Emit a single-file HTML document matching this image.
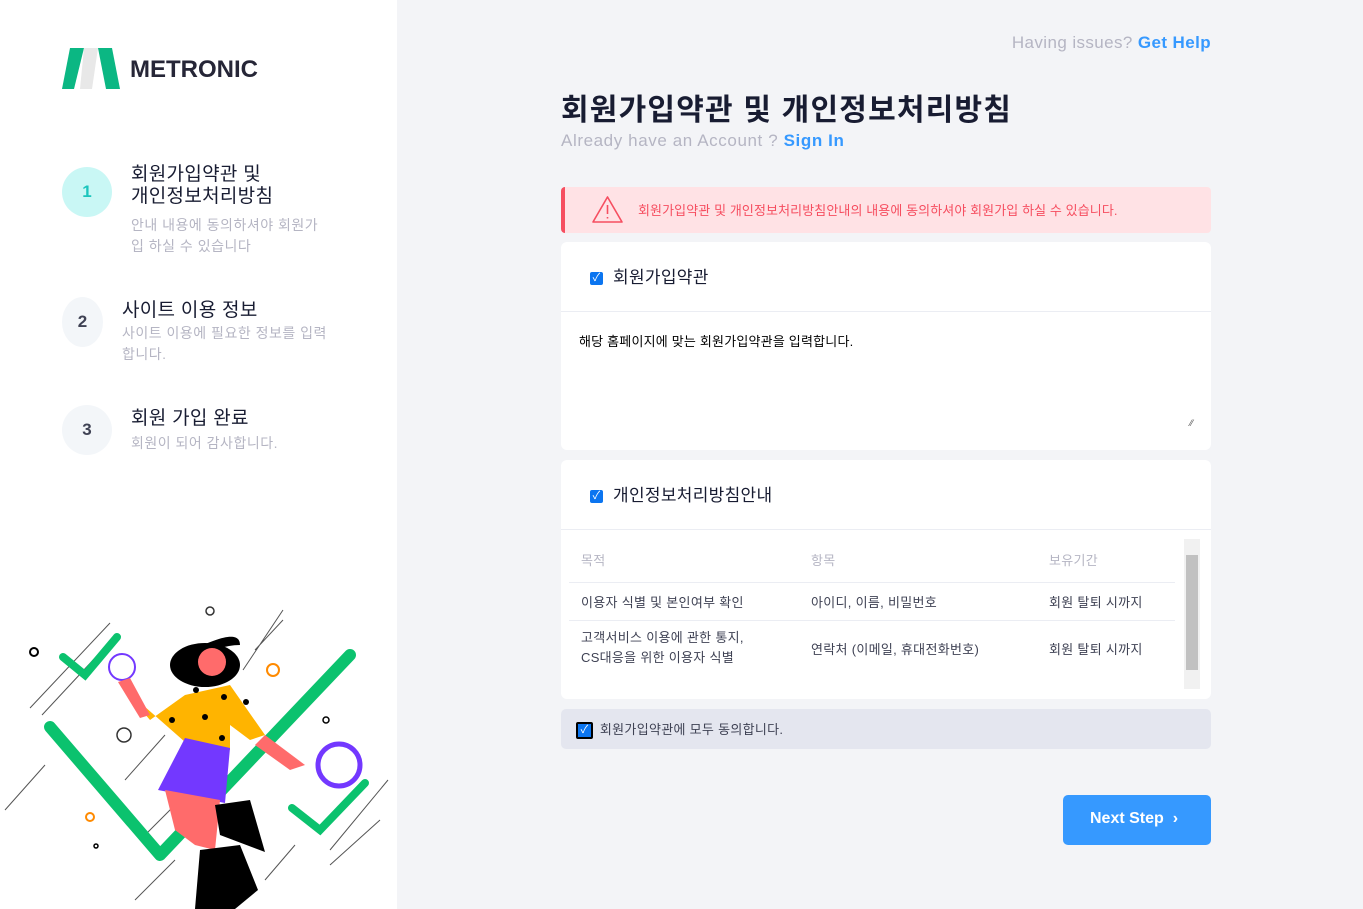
<!DOCTYPE html>
<html><head><meta charset="utf-8"><style>
*{box-sizing:border-box;margin:0;padding:0}
body{width:1363px;height:909px;overflow:hidden;font-family:"Liberation Sans","Noto Sans CJK KR",sans-serif;background:#f3f4f7;position:relative}
.left{position:absolute;left:0;top:0;width:397px;height:909px;background:#fff}
.abs{position:absolute}
.circ{position:absolute;width:50px;height:50px;border-radius:50%;background:#f3f6f9;color:#3f4254;font-weight:bold;font-size:17px;display:flex;align-items:center;justify-content:center}
.st{font-size:19px;color:#181c32;letter-spacing:0.3px}
.sd{font-size:14px;color:#b5b5c3;line-height:21px;letter-spacing:0.5px}
.card{position:absolute;left:561px;width:650px;background:#fff;border-radius:6px}
.cb{display:inline-block;width:13px;height:13px;background:#0b75f0;border-radius:2px;color:#fff;font-size:11px;line-height:13px;text-align:center;vertical-align:middle;margin-right:5px}
td,th{font-size:13px;color:#3f4254;text-align:left;font-weight:normal;letter-spacing:0.3px}
</style></head><body>
<div class="left">
<svg class="abs" style="left:62px;top:48px" width="58" height="41" viewBox="0 0 58 41"><path d="M8 0h14L12 41H0z" fill="#0bb783"/><path d="M22 0h14l-6 41H18z" fill="#e8e8e8"/><path d="M36 0h14l8 41H44z" fill="#0bb783"/></svg>
<div class="abs" style="left:130px;top:56px;font-size:24px;font-weight:bold;color:#262637;letter-spacing:0px">METRONIC</div>
<div class="circ" style="left:62px;top:167px;background:#c9f7f5;color:#1bc5bd">1</div>
<div class="abs st" style="left:131px;top:164px;line-height:22px">회원가입약관 및<br>개인정보처리방침</div>
<div class="abs sd" style="left:131px;top:215px">안내 내용에 동의하셔야 회원가<br>입 하실 수 있습니다</div>
<div class="circ" style="left:62px;top:297px;width:41px">2</div>
<div class="abs st" style="left:122px;top:295px">사이트 이용 정보</div>
<div class="abs sd" style="left:122px;top:323px">사이트 이용에 필요한 정보를 입력<br>합니다.</div>
<div class="circ" style="left:62px;top:405px">3</div>
<div class="abs st" style="left:131px;top:403px">회원 가입 완료</div>
<div class="abs sd" style="left:131px;top:433px">회원이 되어 감사합니다.</div>
<svg class="abs" style="left:0;top:590px" width="397" height="319" viewBox="0 0 397 319" fill="none">
<g stroke="#555" stroke-width="1"><path d="M30 118L110 33M42 125L95 68M5 220L45 175M125 190L165 145M140 250L175 215M135 310L175 270M265 290L295 255M330 260L388 190M330 275L380 230M243 80L283 20M255 60L283 30"/></g>
<path d="M50 137L160 265L350 65" stroke="#0bc26e" stroke-width="12" stroke-linecap="round" stroke-linejoin="round"/>
<path d="M63 67L85 85L117 47" stroke="#0bc26e" stroke-width="8" stroke-linecap="round"/>
<path d="M292 218L320 240L365 193" stroke="#0bc26e" stroke-width="8" stroke-linecap="round"/>
<circle cx="122" cy="77" r="13" stroke="#7338ff" stroke-width="2"/>
<circle cx="339" cy="175" r="21" stroke="#7338ff" stroke-width="5"/>
<circle cx="273" cy="80" r="6" stroke="#ff8a00" stroke-width="2"/>
<circle cx="90" cy="227" r="4" stroke="#ff8a00" stroke-width="2"/>
<circle cx="34" cy="62" r="4" stroke="#000" stroke-width="2"/>
<circle cx="210" cy="21" r="4" stroke="#333" stroke-width="1.5"/>
<circle cx="124" cy="145" r="7" stroke="#333" stroke-width="1.5"/>
<circle cx="326" cy="130" r="3" stroke="#000" stroke-width="1.5"/>
<circle cx="96" cy="256" r="2" stroke="#000" stroke-width="1.5"/>
<path d="M183 65C230 40 240 45 240 55C220 55 210 65 195 60" fill="#000"/>
<ellipse cx="205" cy="75" rx="35" ry="22" fill="#000"/>
<circle cx="212" cy="72" r="14" fill="#ff6b6b"/>
<path d="M120 95L150 130L185 105L230 95L265 145L250 150L230 135L230 160L185 152L160 130Z" fill="#ffb400"/>
<path d="M185 148L230 158L225 213L158 200Z" fill="#7338ff"/>
<path d="M165 200L220 210L215 260L195 255L175 240Z" fill="#ff6b6b"/>
<path d="M215 215L250 210L265 262L220 245Z" fill="#000"/>
<path d="M200 260L240 255L258 300L235 319H195Z" fill="#000"/>
<path d="M265 145L305 175L290 180L255 155Z" fill="#ff6b6b"/>
<path d="M118 92L130 88L150 125L140 128Z" fill="#ff6b6b"/>
<g fill="#000"><circle cx="196" cy="100" r="3"/><circle cx="224" cy="107" r="3"/><circle cx="205" cy="127" r="3"/><circle cx="172" cy="130" r="3"/><circle cx="222" cy="148" r="3"/><circle cx="246" cy="112" r="3"/></g>
</svg>
</div>
<div class="abs" style="left:999px;top:33px;font-size:17px;color:#b5b5c3;letter-spacing:0.4px;width:212px;text-align:right;white-space:nowrap;left:auto;right:152px">Having issues? <span style="color:#3699ff;font-weight:bold">Get Help</span></div>
<div class="abs" style="left:561px;top:85px;font-size:30px;font-weight:bold;color:#181c32;letter-spacing:1.2px">회원가입약관 및 개인정보처리방침</div>
<div class="abs" style="left:561px;top:131px;font-size:17px;color:#b5b5c3;letter-spacing:0.6px">Already have an Account ? <span style="color:#3699ff;font-weight:bold">Sign In</span></div>
<div class="abs" style="left:561px;top:187px;width:650px;height:46px;background:#ffe2e5;border-left:4px solid #f64e60;border-radius:4px">
<svg class="abs" style="left:26px;top:8px" width="33" height="29" viewBox="0 0 33 29" fill="none" stroke="#f64e60" stroke-width="1.6"><path d="M16.5 2L31 27H2Z" stroke-linejoin="round"/><path d="M16.5 10v9M16.5 22v1.5"/></svg>
<div class="abs" style="left:73px;top:13px;font-size:13px;color:#f64e60;letter-spacing:0.1px">회원가입약관 및 개인정보처리방침안내의 내용에 동의하셔야 회원가입 하실 수 있습니다.</div></div>
<div class="card" style="top:242px;height:208px">
<div style="height:70px;border-bottom:1px solid #ebedf3;padding:21px 0 0 29px;font-size:17px;color:#181c32;letter-spacing:0.3px"><span class="cb">✓</span> 회원가입약관</div>
<div style="padding:19px 18px;font-size:13px;color:#000;letter-spacing:0.2px">해당 홈페이지에 맞는 회원가입약관을 입력합니다.</div>
<div class="abs" style="right:18px;top:176px;font-size:9px;color:#555">⁄⁄</div></div>
<div class="card" style="top:460px;height:239px">
<div style="height:70px;border-bottom:1px solid #ebedf3;padding:21px 0 0 29px;font-size:17px;color:#181c32;letter-spacing:0.3px"><span class="cb">✓</span> 개인정보처리방침안내</div>
<table class="abs" style="left:8px;top:78px;width:606px;border-collapse:collapse">
<tr style="height:44px;border-bottom:1px solid #ebedf3"><th style="color:#b5b5c3;padding-left:12px;width:242px">목적</th><th style="color:#b5b5c3;width:238px">항목</th><th style="color:#b5b5c3">보유기간</th></tr>
<tr style="height:38px;border-bottom:1px solid #ebedf3"><td style="padding-left:12px">이용자 식별 및 본인여부 확인</td><td>아이디, 이름, 비밀번호</td><td>회원 탈퇴 시까지</td></tr>
<tr style="height:56px"><td style="padding-left:12px;line-height:20px">고객서비스 이용에 관한 통지,<br>CS대응을 위한 이용자 식별</td><td>연락처 (이메일, 휴대전화번호)</td><td>회원 탈퇴 시까지</td></tr></table>
<div class="abs" style="left:623px;top:79px;width:16px;height:150px;background:#f1f1f1"><div style="margin:16px 2px;height:115px;background:#c1c1c1"></div></div></div>
<div class="abs" style="left:561px;top:709px;width:650px;height:40px;background:#e4e6ef;border-radius:5px;padding:10px 0 0 15px;font-size:13px;color:#3f4254;letter-spacing:0.3px"><span class="cb" style="width:17px;height:17px;border:2px solid #000;line-height:13px;margin-right:3px">✓</span> 회원가입약관에 모두 동의합니다.</div>
<div class="abs" style="left:1063px;top:795px;width:148px;height:50px;background:#3699ff;border-radius:5px;color:#fff;font-weight:bold;font-size:16px;padding:15px 0 0 27px">Next Step &nbsp;›</div>
</body></html>
